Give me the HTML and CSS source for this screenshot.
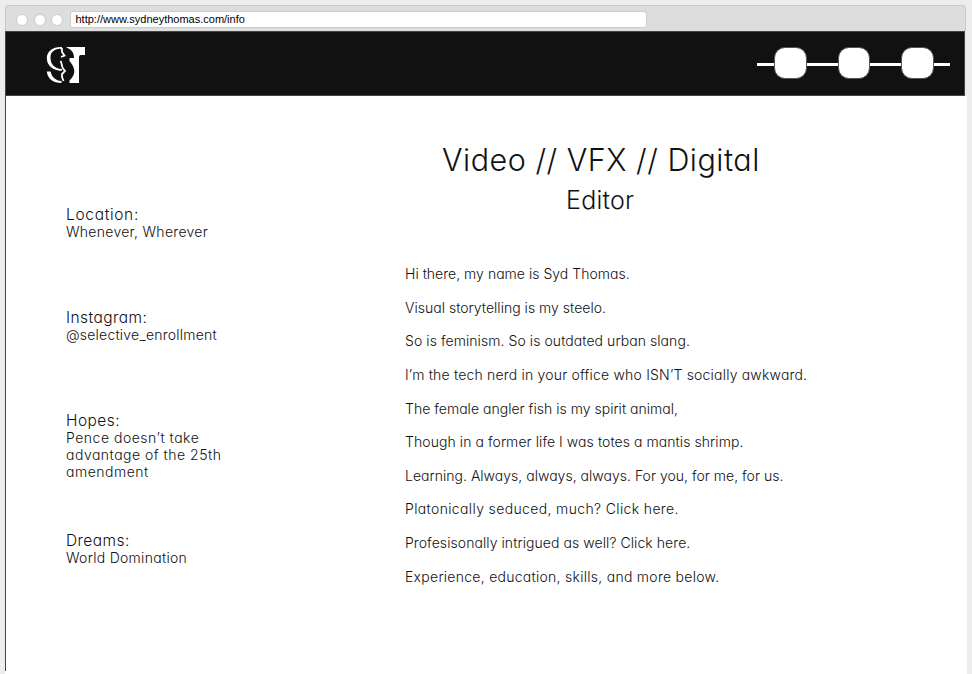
FILE: index.html
```html
<!DOCTYPE html>
<html lang="en">
<head>
<meta charset="utf-8">
<title>Syd Thomas</title>
<link rel="stylesheet" href="styles.css">
</head>
<body>
<div class="window">
  <div class="chrome">
    <span class="dot"></span><span class="dot"></span><span class="dot"></span>
    <div class="url">http://www.sydneythomas.com/info</div>
  </div>
  <header class="header">
    <svg class="logo" width="40" height="38" viewBox="46 46 40 38" fill="#fff" aria-label="ST">
      <path d="M62 47C53 46.500 46.800 51.500 46.800 58C46.800 65.500 53 70.500 61.500 71L62 69C54 68.500 50.500 64 50.500 57.500C50.500 52 54 49 62 48.500Z"/>
      <path d="M46.800 71.500C47.500 78.500 53 83 61.500 83V81C55.500 80.500 52 77.500 50.500 71.500Z"/>
      <path d="M66.500 47H85V55H81C79.300 55 79 56 79 58V83H69.500V80.500C73 77 74.500 74 74.300 70.500C74 66.500 71.500 63.500 69.500 61V58H74C74 53.500 72.500 50 66.500 47.500Z"/>
      <path d="M60.500 48L62 49V52L64.500 55.500L61 57M60.500 61C62 63 61.500 66 63 68.500L65 71L62 74V77L63.500 81" fill="none" stroke="#fff" stroke-width="1.800"/>
    </svg>
    <nav class="nav"><i class="knob"></i><i class="knob"></i><i class="knob"></i></nav>
  </header>
  <main class="page">
    <aside class="facts">
      <section class="fact"><h3 class="loose">Location:</h3><p>Whenever, Wherever</p></section>
      <section class="fact"><h3>Instagram:</h3><p class="snug">@selective_enrollment</p></section>
      <section class="fact fact-tall"><h3>Hopes:</h3><p class="loose">Pence doesn’t take<br>advantage of the 25th<br>amendment</p></section>
      <section class="fact"><h3>Dreams:</h3><p>World Domination</p></section>
    </aside>
    <article class="about">
      <h1>Video // VFX // Digital</h1>
      <h2>Editor</h2>
      <div class="bio">
        <p class="snug">Hi there, my name is Syd Thomas.</p>
        <p class="snug">Visual storytelling is my steelo.</p>
        <p>So is feminism. So is outdated urban slang.</p>
        <p class="open">I’m the tech nerd in your office who ISN’T socially awkward.</p>
        <p class="snug">The female angler fish is my spirit animal,</p>
        <p>Though in a former life I was totes a mantis shrimp.</p>
        <p class="snug">Learning. Always, always, always. For you, for me, for us.</p>
        <p class="wide">Platonically seduced, much? Click here.</p>
        <p>Profesisonally intrigued as well? Click here.</p>
        <p class="wider">Experience, education, skills, and more below.</p>
      </div>
    </article>
  </main>
</div>
</body>
</html>
```
FILE: styles.css
```css
* { box-sizing: border-box; }
body { margin: 0; height: 674px; overflow: hidden; background: #ededed; color: #111; font-family: "Century Gothic", Inter, sans-serif; font-weight: 300; font-feature-settings: "cv11"; }
h1, h2, h3, p { margin: 0; font-weight: 300; white-space: nowrap; }
.window { width: 962px; margin: 5px 0 0 5px; }
.chrome { display: flex; align-items: center; width: 961px; height: 26px; padding: 2px 0 0 10px; background: #ddd; border: 1px solid #c8c8c8; border-bottom: 0; border-radius: 4px 4px 0 0; }
.dot { width: 12px; height: 12px; margin-right: 5.5px; background: #fff; border: 1px solid #ccc; border-radius: 50%; }
.url { width: 577px; height: 17px; padding-left: 5px; margin-left: 1px; background: #fff; border: 1px solid #ccc; border-radius: 3px; font: 400 11px/15px "Liberation Sans", sans-serif; color: #000; }
.header { display: flex; justify-content: space-between; align-items: center; width: 960px; height: 65px; padding: 0 15px 0 40px; background: #111; border: 1px solid #444; }
.logo { margin-top: 3px; }
.nav { display: flex; align-items: center; gap: 31px; width: 193px; height: 33px; padding-left: 17px; margin: -2px -1px 0 0; background: linear-gradient(#fff, #fff) 0 17px / 193px 3px no-repeat; }
.knob { width: 32.500px; height: 32px; background: #fff; border: 1px solid #555; border-radius: 11px; }
.page { display: flex; height: 578px; background: linear-gradient(#444, #444) 0 0 / 1px 575px no-repeat #fff; }
.facts { width: 400px; padding: 110px 0 0 61px; }
.fact { height: 103px; }
.fact-tall { height: 120px; }
.fact h3 { font-size: 15.500px; line-height: 18px; letter-spacing: 0.45px; }
.fact h3.loose { letter-spacing: 0.68px; }
.fact p { margin-top: -1px; font-size: 14px; line-height: 17px; letter-spacing: 0.29px; }
.fact p.snug { letter-spacing: 0.22px; }
.fact p.loose { letter-spacing: 0.5px; }
.about { width: 420px; }
.about h1 { padding-top: 43px; margin-left: 37px; font-size: 30.500px; line-height: 42px; letter-spacing: 0.51px; }
.about h2 { padding-top: 2px; margin-left: 161px; font-size: 25px; line-height: 34px; letter-spacing: 0.25px; }
.bio { margin-top: 40px; font-size: 14px; line-height: 33.630px; letter-spacing: 0.07px; }
.bio .snug { letter-spacing: 0.02px; }
.bio .open { letter-spacing: 0.19px; }
.bio .wide { letter-spacing: 0.36px; }
.bio .wider { letter-spacing: 0.27px; }
```
